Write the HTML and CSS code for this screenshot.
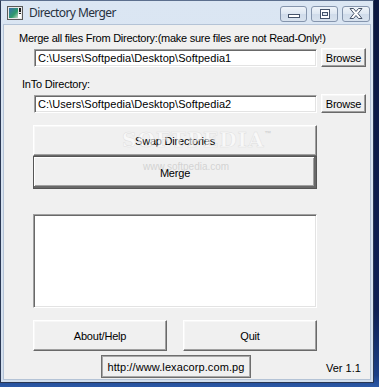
FILE: index.html
```html
<!DOCTYPE html>
<html lang="en">
<head>
    <meta charset="UTF-8">
    <meta name="viewport" content="width=device-width, initial-scale=1.0">
    <title>Directory Merger</title>
    <link rel="stylesheet" href="styles.css">
</head>
<body>
    <div class="window">
        <div class="titlebar">
            <svg class="app-icon" width="16" height="14" viewBox="0 0 16 14">
                <defs>
                    <linearGradient id="ig" x1="0" y1="0" x2="1" y2="1">
                        <stop offset="0" stop-color="#3a6fb0"/>
                        <stop offset="0.6" stop-color="#2e9a6a"/>
                        <stop offset="1" stop-color="#c8d8c8"/>
                    </linearGradient>
                </defs>
                <rect x="0.5" y="0.5" width="15" height="13" fill="#e8e8e8" stroke="#5a5a5a"/>
                <rect x="2" y="2" width="9" height="10" fill="url(#ig)"/>
                <rect x="11" y="8" width="3" height="4" fill="#ffffff"/>
                <rect x="12" y="2" width="2" height="4" fill="#202020"/>
                <rect x="12" y="7" width="2" height="1" fill="#202020"/>
            </svg>
            <span class="title">Directory Merger</span>
            <div class="caption-buttons">
                <div class="cap-btn">
                    <svg width="12" height="8" viewBox="0 0 12 8"><rect x="0.5" y="4.5" width="11" height="3" fill="#fff" stroke="#45536a"/></svg>
                </div>
                <div class="cap-btn">
                    <svg width="12" height="10" viewBox="0 0 12 10"><rect x="1.5" y="0.5" width="9" height="9" fill="#fff" stroke="#45536a"/><rect x="3.5" y="3.5" width="5" height="3" fill="#dfe6ef" stroke="#45536a"/></svg>
                </div>
                <div class="cap-btn close">
                    <svg width="16" height="11" viewBox="0 0 16 11"><path d="M2 0.5 L5.5 0.5 L8 3.5 L10.5 0.5 L14 0.5 L10 5.5 L14 10.5 L10.5 10.5 L8 7.5 L5.5 10.5 L2 10.5 L6 5.5 Z" fill="#fff" stroke="#45536a"/></svg>
                </div>
            </div>
        </div>
        <div class="client">
            <div class="label label-from">Merge all files From Directory:(make sure files are not Read-Only!)</div>
            <div class="dir-row">
                <div class="textbox">C:\Users\Softpedia\Desktop\Softpedia1</div>
                <button class="btn browse">Browse</button>
            </div>
            <div class="label label-into">InTo Directory:</div>
            <div class="dir-row">
                <div class="textbox">C:\Users\Softpedia\Desktop\Softpedia2</div>
                <button class="btn browse">Browse</button>
            </div>
            <div class="actions">
                <button class="btn wide swap">Swap Directories</button>
                <button class="btn wide merge default">Merge</button>
                <div class="watermark">SOFTPEDIA<sup>™</sup></div>
                <div class="watermark-url">www.softpedia.com</div>
            </div>
            <div class="listbox"></div>
            <div class="bottom-buttons">
                <button class="btn half">About/Help</button>
                <button class="btn half">Quit</button>
            </div>
            <div class="footer">
                <div class="link">http://www.lexacorp.com.pg</div>
                <div class="version">Ver 1.1</div>
            </div>
        </div>
    </div>
</body>
</html>
```

FILE: styles.css
```css
body {
    margin: 0;
    width: 379px;
    height: 387px;
    overflow: hidden;
    background: linear-gradient(180deg, #0b1840 0%, #0e2054 80%, #1b3f86 97%, #2c5aa8 100%);
    font-family: "Liberation Sans", Arial, sans-serif;
    font-size: 11px;
    color: #000;
}
.window {
    width: 374px;
    height: 383px;
    box-sizing: border-box;
    border: 1px solid #2a3854;
    border-top-color: #5c6f8e;
    background: linear-gradient(180deg, #dbe6f3 0%, #d3dfee 100%);
    padding: 0 2px 2px 2px;
    display: flex;
    flex-direction: column;
}
.titlebar {
    height: 23px;
    display: flex;
    align-items: center;
    padding-left: 4px;
}
.app-icon {
    margin-top: 1px;
}
.title {
    margin-left: 6px;
    font-family: "Noto Sans", "Liberation Sans", sans-serif;
    font-size: 12px;
    letter-spacing: -0.6px;
    color: #28323f;
}
.caption-buttons {
    margin-left: auto;
    display: flex;
    gap: 4px;
    margin-right: 1px;
    margin-top: 2px;
}
.cap-btn {
    width: 25px;
    height: 14px;
    border: 1px solid #8595ad;
    border-radius: 3px;
    background: linear-gradient(180deg, #eef3f9 0%, #dde6f1 50%, #cfdbea 51%, #d8e2ee 100%);
    display: flex;
    align-items: center;
    justify-content: center;
}
.cap-btn.close {
    width: 26px;
}
.client {
    flex: 1;
    background: #f0f0f0;
    border: 1px solid #b4c3d6;
    padding: 6px 0 0 29px;
    position: relative;
}
.label {
    line-height: 14px;
    height: 14px;
}
.label-from {
    margin-left: -14px;
    letter-spacing: -0.26px;
}
.label-into {
    margin-left: -11px;
    margin-top: 10px;
    letter-spacing: -0.2px;
}
.dir-row {
    display: flex;
    align-items: flex-start;
    margin-top: 3px;
}
.textbox {
    width: 283px;
    height: 18px;
    box-sizing: border-box;
    margin-left: 1px;
    margin-top: 1px;
    background: #fff;
    border-style: solid;
    border-width: 1px;
    border-color: #a0a0a0 #ffffff #ffffff #a0a0a0;
    box-shadow: inset 1px 1px 0 #696969, inset -1px -1px 0 #e3e3e3;
    padding: 2px 0 0 3px;
    line-height: 13px;
    letter-spacing: 0.05px;
    white-space: nowrap;
    overflow: hidden;
}
.btn {
    font-family: "Liberation Sans", Arial, sans-serif;
    font-size: 11px;
    letter-spacing: -0.2px;
    color: #000;
    background: #f0f0f0;
    box-sizing: border-box;
    border-style: solid;
    border-width: 1px;
    border-color: #ffffff #696969 #696969 #ffffff;
    box-shadow: inset -1px -1px 0 #a0a0a0, inset 1px 1px 0 #f7f7f7;
    padding: 0;
    margin: 0;
}
.browse {
    width: 45px;
    height: 19px;
    margin-left: 4px;
    padding-top: 1px;
}
.actions {
    margin-top: 12px;
    width: 284px;
    display: flex;
    flex-direction: column;
    position: relative;
}
.wide {
    width: 284px;
    height: 31px;
}
.merge.default {
    height: 33px;
    border: 1px solid #555;
    box-shadow: inset -2px -2px 0 #696969, inset 1px 1px 0 #ffffff, inset -3px -3px 0 #a0a0a0;
}
.watermark {
    position: absolute;
    left: 89px;
    top: 3px;
    font-family: "DejaVu Serif", serif;
    font-size: 20px;
    font-weight: bold;
    letter-spacing: 1px;
    color: rgba(255, 255, 255, 0.6);
    -webkit-text-stroke: 0.5px rgba(200, 200, 200, 0.5);
    pointer-events: none;
}
.watermark sup {
    font-size: 7px;
    font-family: "Liberation Sans", sans-serif;
    -webkit-text-stroke: 0;
    color: #d0d0d0;
    vertical-align: 11px;
}
.watermark-url {
    position: absolute;
    left: 110px;
    top: 36px;
    font-size: 10px;
    color: rgba(195, 195, 195, 0.65);
    pointer-events: none;
}
.listbox {
    margin-top: 25px;
    width: 284px;
    height: 94px;
    box-sizing: border-box;
    background: #fff;
    border-style: solid;
    border-width: 1px;
    border-color: #a0a0a0 #ffffff #ffffff #a0a0a0;
    box-shadow: inset 1px 1px 0 #696969, inset -1px -1px 0 #e3e3e3;
}
.bottom-buttons {
    margin-top: 12px;
    width: 284px;
    display: flex;
    justify-content: space-between;
}
.half {
    width: 134px;
    height: 31px;
}
.footer {
    margin-top: 4px;
    display: flex;
    align-items: center;
}
.link {
    margin-left: 68px;
    width: 150px;
    height: 23px;
    box-sizing: border-box;
    border: 1px solid #6e6e6e;
    box-shadow: inset 0 0 0 1px #a8a8a8;
    display: flex;
    align-items: center;
    justify-content: center;
    font-size: 11px;
    letter-spacing: 0.1px;
}
.version {
    margin-left: 75px;
    font-size: 11px;
    margin-top: 2px;
}
```
